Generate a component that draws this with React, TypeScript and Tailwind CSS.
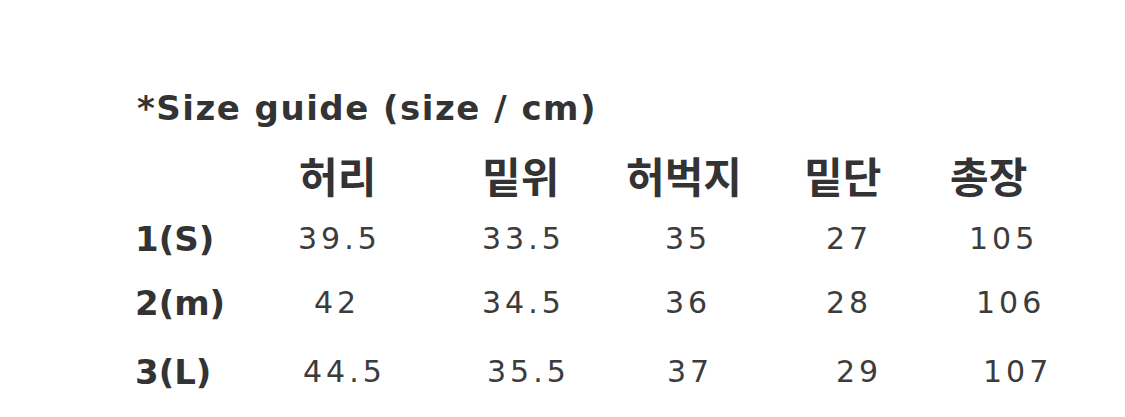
import React from "react";

const latin = { fontFamily: '"DejaVu Sans", "Noto Sans CJK KR", sans-serif' } as React.CSSProperties;

type Cell = { v: string; ml: string };

const rows: { label: string; h: string; cells: Cell[] }[] = [
  {
    label: "1(S)",
    h: "h-[64px]",
    cells: [
      { v: "39.5", ml: "ml-[0px]" },
      { v: "33.5", ml: "ml-[0px]" },
      { v: "35", ml: "ml-[39px]" },
      { v: "27", ml: "ml-[22px]" },
      { v: "105", ml: "ml-[19px]" },
    ],
  },
  {
    label: "2(m)",
    h: "h-[63px]",
    cells: [
      { v: "42", ml: "ml-[16px]" },
      { v: "34.5", ml: "ml-[0px]" },
      { v: "36", ml: "ml-[39px]" },
      { v: "28", ml: "ml-[22px]" },
      { v: "106", ml: "ml-[26px]" },
    ],
  },
  {
    label: "3(L)",
    h: "h-[76px]",
    cells: [
      { v: "44.5", ml: "ml-[5px]" },
      { v: "35.5", ml: "ml-[5px]" },
      { v: "37", ml: "ml-[41px]" },
      { v: "29", ml: "ml-[32px]" },
      { v: "107", ml: "ml-[33px]" },
    ],
  },
];

const widths = ["w-[163px]", "w-[184px]", "w-[144px]", "w-[178px]", "w-[146px]", "w-[150px]"];

export default function App() {
  return (
    <div className="w-[1125px] h-[417px] bg-white text-[#333333] overflow-hidden">
      <div className="pt-[88px] pl-[135px]">
        <div
          className="h-[40px] pl-[2px] flex items-center text-[34px] font-bold leading-none tracking-[1.5px]"
          style={latin}
        >
          *Size guide (size / cm)
        </div>
        <div className="mt-[15px] h-[64px] flex items-center">
          <div className={widths[0]} />
          {["허리", "밑위", "허벅지", "밑단", "총장"].map((t, i) => (
            <div
              key={t}
              className={`${widths[i + 1]} text-[42px] font-bold leading-none ${i === 0 ? "pl-[1px]" : ""}`}
              style={{ fontFamily: '"Noto Sans CJK KR", sans-serif' }}
            >
              {t}
            </div>
          ))}
        </div>
        {rows.map((r) => (
          <div key={r.label} className={`${r.h} flex items-center`}>
            <div className={`${widths[0]} text-[34px] font-bold leading-none tracking-[0px]`} style={latin}>
              {r.label}
            </div>
            {r.cells.map((c, i) => (
              <div key={i} className={`${widths[i + 1]} leading-none`}>
                <span className={`${c.ml} inline-block text-[30px] tracking-[4px] text-[#3c3c3c]`} style={latin}>
                  {c.v}
                </span>
              </div>
            ))}
          </div>
        ))}
      </div>
    </div>
  );
}
